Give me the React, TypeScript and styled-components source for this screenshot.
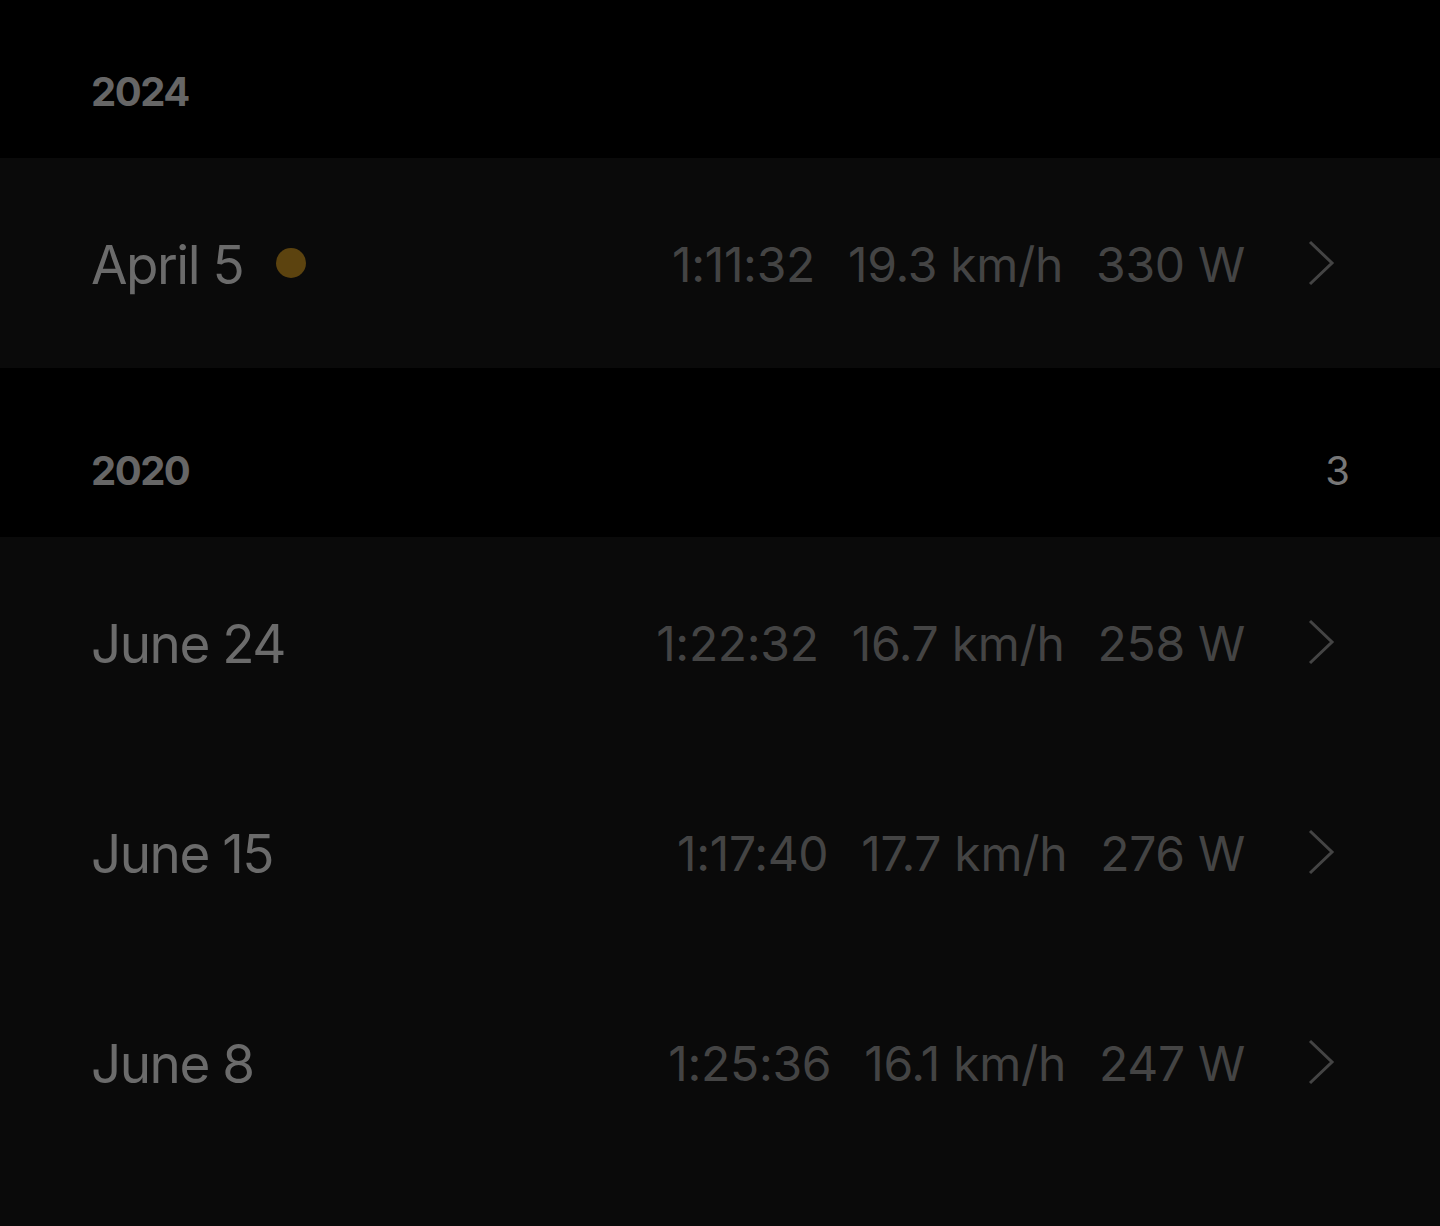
import React from "react";
import styled, { createGlobalStyle } from "styled-components";

const Global = createGlobalStyle`
  html, body { margin: 0; padding: 0; background: #000; }
  body { font-family: Inter, "Noto Sans", sans-serif; }
`;

const Page = styled.div`
  width: 1440px;
  min-height: 1226px;
  background: #000;
  display: flex;
  flex-direction: column;
`;

const Section = styled.section<{ $grow?: boolean }>`
  display: flex;
  flex-direction: column;
  flex: ${(p) => (p.$grow ? 1 : "none")};
`;

const YearHeader = styled.div<{ $top: number }>`
  height: ${(p) => p.$top}px;
  box-sizing: border-box;
  padding: 0 90px 46px 91px;
  display: flex;
  align-items: flex-end;
  justify-content: space-between;
  background: #000;
`;

const YearLabel = styled.span`
  font-size: 40px;
  font-weight: 700;
  color: #666;
  line-height: 40px;
  letter-spacing: -1.5px;
`;

const Count = styled.span`
  font-size: 40px;
  font-weight: 400;
  color: #777;
  line-height: 40px;
`;

const List = styled.div<{ $grow?: boolean }>`
  background: #0a0a0a;
  display: flex;
  flex-direction: column;
  flex: ${(p) => (p.$grow ? 1 : "none")};
`;

const Row = styled.div`
  height: 210px;
  box-sizing: border-box;
  padding: 0 105px 0 91px;
  display: flex;
  align-items: center;
`;

const DateLabel = styled.span`
  font-size: 53px;
  color: #6b6b6b;
  letter-spacing: -1.5px;
  line-height: 1;
  padding-top: 4px;
`;

const Dot = styled.span`
  width: 30px;
  height: 30px;
  border-radius: 50%;
  background: #5c430f;
  margin-left: 33px;
`;

const Stats = styled.div`
  margin-left: auto;
  display: flex;
  gap: 33px;
  align-items: center;
  padding-top: 4px;
`;

const Stat = styled.span`
  font-size: 48px;
  color: #444;
  letter-spacing: -0.3px;
  line-height: 1;
`;

const Chevron = styled.svg`
  width: 28px;
  height: 46px;
  margin-left: 62px;
  flex: none;
`;

type Ride = { date: string; time: string; speed: string; power: string; dot?: boolean };

const RideRow = ({ r }: { r: Ride }) => (
  <Row>
    <DateLabel>{r.date}</DateLabel>
    {r.dot && <Dot />}
    <Stats>
      <Stat>{r.time}</Stat>
      <Stat>{r.speed}</Stat>
      <Stat>{r.power}</Stat>
    </Stats>
    <Chevron viewBox="0 0 28 46">
      <path d="M3 2 L25 23 L3 44" fill="none" stroke="#444" strokeWidth="3" />
    </Chevron>
  </Row>
);

export default function App() {
  const y2024: Ride[] = [{ date: "April 5", time: "1:11:32", speed: "19.3 km/h", power: "330 W", dot: true }];
  const y2020: Ride[] = [
    { date: "June 24", time: "1:22:32", speed: "16.7 km/h", power: "258 W" },
    { date: "June 15", time: "1:17:40", speed: "17.7 km/h", power: "276 W" },
    { date: "June 8", time: "1:25:36", speed: "16.1 km/h", power: "247 W" },
  ];
  return (
    <Page>
      <Global />
      <Section>
        <YearHeader $top={158}>
          <YearLabel>2024</YearLabel>
        </YearHeader>
        <List>
          {y2024.map((r) => (
            <RideRow key={r.date} r={r} />
          ))}
        </List>
      </Section>
      <Section $grow>
        <YearHeader $top={169}>
          <YearLabel>2020</YearLabel>
          <Count>3</Count>
        </YearHeader>
        <List $grow>
          {y2020.map((r) => (
            <RideRow key={r.date} r={r} />
          ))}
        </List>
      </Section>
    </Page>
  );
}
